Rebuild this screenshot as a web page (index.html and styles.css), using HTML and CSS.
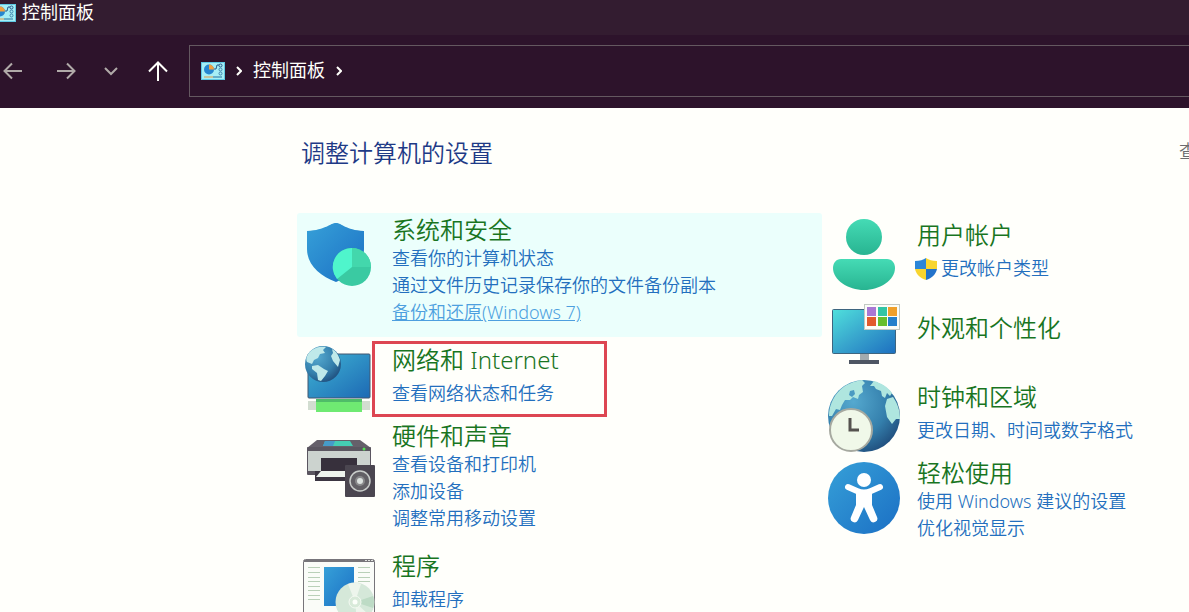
FILE: index.html
```html
<!DOCTYPE html>
<html lang="zh-CN">
<head>
<meta charset="UTF-8">
<meta name="viewport" content="width=device-width, initial-scale=1.0">
<title>控制面板</title>
<link rel="stylesheet" href="styles.css">
</head>
<body>

<!-- shared drawings -->
<svg class="defs" width="0" height="0" aria-hidden="true">
  <defs>
    <linearGradient id="blue" x1="0" y1="0" x2="1" y2="1">
      <stop offset="0" stop-color="#36a0d8"/><stop offset="1" stop-color="#1b6fc4"/>
    </linearGradient>
    <linearGradient id="screen" x1="0" y1="0" x2="1" y2="1">
      <stop offset="0" stop-color="#4fe0dc"/><stop offset=".5" stop-color="#38a5cd"/><stop offset="1" stop-color="#1d6fc0"/>
    </linearGradient>
    <linearGradient id="green" x1="0" y1="0" x2="0" y2="1">
      <stop offset="0" stop-color="#45dbb5"/><stop offset="1" stop-color="#28b491"/>
    </linearGradient>
    <linearGradient id="netscreen" x1="0" y1="0" x2="1" y2="1">
      <stop offset="0" stop-color="#3fb4d4"/><stop offset="1" stop-color="#1d69b4"/>
    </linearGradient>
    <radialGradient id="globe" cx=".35" cy=".3" r=".8">
      <stop offset="0" stop-color="#55a9cf"/><stop offset=".6" stop-color="#347fac"/><stop offset="1" stop-color="#1d4877"/>
    </radialGradient>
    <symbol id="cpl" viewBox="0 0 24 18">
      <rect width="24" height="18" fill="#a6eef5"/>
      <rect x=".5" y=".5" width="23" height="17" fill="none" stroke="#5fc9e4"/>
      <circle cx="8" cy="7.500" r="5" fill="#2686cf"/>
      <path d="M8 7.500V2.500a5 5 0 0 1 5 5z" fill="#f0a040"/>
      <path d="M13 7h2l1-4h2" fill="none" stroke="#27588a"/>
      <circle cx="19.500" cy="3.500" r="1.500" fill="none" stroke="#27588a"/>
      <circle cx="19.500" cy="7.500" r="1.500" fill="none" stroke="#4085b0"/>
      <circle cx="19.500" cy="11.500" r="1.500" fill="none" stroke="#4085b0"/>
      <path d="M3 15h9" stroke="#e39b45"/><path d="M12 15h9" stroke="#27709f"/>
    </symbol>
  </defs>
</svg>

<div class="titlebar">
  <svg class="cpl-icon" aria-hidden="true"><use href="#cpl"/></svg>
  <span>控制面板</span>
</div>

<nav class="toolbar">
  <button class="nav-btn back" aria-label="后退">
    <svg width="20" height="20" viewBox="0 0 20 20"><path d="M19 10H2M9 2.500L1.500 10 9 17.500"/></svg>
  </button>
  <button class="nav-btn forward" aria-label="前进">
    <svg width="20" height="20" viewBox="0 0 20 20"><path d="M1 10h17M11 2.500L18.500 10 11 17.500"/></svg>
  </button>
  <button class="nav-btn recent" aria-label="最近浏览的位置">
    <svg width="14" height="10" viewBox="0 0 14 10"><path d="M1 2l6 6 6-6"/></svg>
  </button>
  <button class="nav-btn up" aria-label="上移">
    <svg width="20" height="20" viewBox="0 0 20 20"><path d="M10 20V2M1 10.500L10 1.500l9 9"/></svg>
  </button>
  <div class="address">
    <svg class="cpl-icon" aria-hidden="true"><use href="#cpl"/></svg>
    <svg class="sep" viewBox="0 0 6 10"><path d="M1 1l4 4-4 4"/></svg>
    <a href="#">控制面板</a>
    <svg class="sep" viewBox="0 0 6 10"><path d="M1 1l4 4-4 4"/></svg>
  </div>
</nav>

<main>
  <header class="page-head">
    <h1>调整计算机的设置</h1>
    <span class="view-by">查</span>
  </header>

  <div class="categories">
    <div class="column">

      <section class="item multi hover">
        <svg class="icon" viewBox="0 0 72 72">
          <path d="M33 4c6 0 9 7 28 8v18c0 16-12 27-28 33C17 57 4 46 4 30V12C23 11 27 4 33 4z" fill="url(#blue)"/>
          <circle cx="49" cy="48" r="19" fill="#3acaa2"/>
          <path d="M49 48V29a19 19 0 0 0-15 31z" fill="#4ff5cc"/>
          <path d="M49 48V29a19 19 0 0 1 19 19z" fill="#43d7ac"/>
        </svg>
        <div class="text">
          <h2><a href="#">系统和安全</a></h2>
          <a href="#">查看你的计算机状态</a>
          <a href="#">通过文件历史记录保存你的文件备份副本</a>
          <a href="#" class="active">备份和还原(Windows 7)</a>
        </div>
      </section>

      <section class="item">
        <svg class="icon" viewBox="0 0 72 72">
          <rect x="5" y="11" width="62" height="44" rx="1" fill="url(#netscreen)" stroke="#43566e"/>
          <path d="M5 58h8v9H5zM59 58h8v9h-8z" fill="#d2ddd0"/>
          <rect x="13" y="56" width="46" height="13" fill="#6fea72"/>
          <path d="M13 56h46v3H13z" fill="#4fbd68"/>
          <circle cx="20" cy="21" r="18" fill="url(#globe)"/>
          <path d="M9 7c4-3 9-4 14-3l-3 3 2 3-5 1-2 4-4 2-2 4-5-2c-2-4 1-9 5-12zM29 6c4 2 7 7 8 11l-2 7-5-6-2-5 2-3zM9 23l6-1 6 4 4 2-3 5-4 5-3-1-1-7-5-4z" fill="#bfe9ea"/>
        </svg>
        <div class="text">
          <h2><a href="#">网络和 Internet</a></h2>
          <a href="#">查看网络状态和任务</a>
        </div>
        <div class="mark"></div>
      </section>

      <section class="item multi">
        <svg class="icon" viewBox="0 0 72 72">
          <path d="M14 15h43l11 8H4z" fill="#65606a"/>
          <path d="M22 16h25l3 5H20z" fill="#45cdb3"/><path d="M22 16h10l-2 5H20z" fill="#469bc9"/>
          <rect x="4" y="22" width="64" height="28" rx="1" fill="#5b5660"/>
          <rect x="5" y="26" width="62" height="20" fill="#ccd3cf"/>
          <circle cx="61" cy="24" r="1.500" fill="#54e356"/>
          <path d="M18 33h36v14H18z" fill="#37303c"/>
          <path d="M12 46h36v10H12z" fill="#3c3642"/>
          <path d="M18 46h28v6H13z" fill="#edf3ed"/>
          <rect x="42" y="40" width="30" height="32" rx="1" fill="#4b4650"/>
          <circle cx="57" cy="56" r="10" fill="#626065" stroke="#c9cdca" stroke-width="1.500"/>
          <circle cx="57" cy="56" r="5" fill="#89898b"/><circle cx="57" cy="56" r="3" fill="#dce2df"/>
        </svg>
        <div class="text">
          <h2><a href="#">硬件和声音</a></h2>
          <a href="#">查看设备和打印机</a>
          <a href="#">添加设备</a>
          <a href="#">调整常用移动设置</a>
        </div>
      </section>

      <section class="item">
        <svg class="icon" viewBox="0 0 72 72">
          <rect x=".5" y="10.500" width="71" height="58" rx="2" fill="#fafcf8" stroke="#77757a"/>
          <path d="M1 11h70v2H1z" fill="#77757a"/>
          <path d="M62 11.500h8" stroke="#e2e4e0" stroke-dasharray="2 1"/>
          <path d="M5 18.500h12M5 23.500h12M5 28.500h12M5 32.500h12M5 37.500h12M5 41.500h12M5 46.500h12M5 50.500h12M55 18.500h12M55 23.500h12M55 28.500h12M55 32.500h12" stroke="#b9d0b8"/>
          <rect x="21" y="18" width="30" height="39" fill="url(#blue)"/>
          <circle cx="52" cy="53" r="19.500" fill="#d5e8d9"/>
          <path d="M52 53L45 35a19.500 19.500 0 0 1 13 0zM52 53l14 13a19.500 19.500 0 0 1-12 6z" fill="#edf5ec"/>
          <path d="M52 53l18-6a19.500 19.500 0 0 1 0 12z" fill="#bddbc5"/>
          <circle cx="52" cy="53" r="6" fill="#d8ead9" stroke="#f5faf3"/><circle cx="52" cy="53" r="2.500" fill="#fcfffa"/>
        </svg>
        <div class="text">
          <h2><a href="#">程序</a></h2>
          <a href="#">卸载程序</a>
        </div>
      </section>
    </div>

    <div class="column right">

      <section class="item">
        <svg class="icon" viewBox="0 0 72 72">
          <circle cx="36" cy="19" r="18" fill="url(#green)"/>
          <path d="M13 41h46c5 0 8 4 8 9 0 12-15 22-31 22S5 62 5 50c0-5 3-9 8-9z" fill="url(#green)"/>
        </svg>
        <div class="text">
          <h2><a href="#">用户帐户</a></h2>
          <a href="#" class="admin">
            <svg viewBox="0 0 22 22">
              <path d="M11 0C8 2 5 3 0 3v8h11z" fill="#2b86d8"/>
              <path d="M11 0c3 2 6 3 11 3v8H11z" fill="#f8d52f"/>
              <path d="M0 11c1 5 5 9 11 11V11z" fill="#f8d52f"/>
              <path d="M22 11c-1 5-5 9-11 11V11z" fill="#2373ca"/>
            </svg>更改帐户类型</a>
        </div>
      </section>

      <section class="item single">
        <svg class="icon" viewBox="0 0 72 72">
          <path d="M32 53h9v9h-9z" fill="#a2abaf"/><path d="M21 60h30v4H21z" fill="#4e5663"/>
          <rect x="4.500" y="9.500" width="63" height="44" rx="1" fill="url(#screen)" stroke="#3e657f"/>
          <rect x="36.500" y="4.500" width="35" height="25" fill="#fbfdf7" stroke="#c2c9c3"/>
          <path d="M39 7h9v9h-9z" fill="#a978d4"/><path d="M50 7h9v9h-9z" fill="#32c5a4"/><path d="M60 7h9v9h-9z" fill="#efa02b"/>
          <path d="M39 17h9v9h-9z" fill="#e25b2c"/><path d="M50 17h9v9h-9z" fill="#66bf2c"/><path d="M60 17h9v9h-9z" fill="#2480cb"/>
        </svg>
        <div class="text">
          <h2><a href="#">外观和个性化</a></h2>
        </div>
      </section>

      <section class="item">
        <svg class="icon" viewBox="0 0 72 72">
          <circle cx="36" cy="36" r="36" fill="url(#globe)"/>
          <path d="M12 10c6-6 15-9 22-10l3 3-3 3 1 6-4 3-1 4-5-2-3 3-5 0-3 5-2 5-4-1-4 7-3 0c0-10 4-19 11-26zM46 1c7 2 14 6 18 12l-2 3-3-3-2 5-3-2-1-5-5-2-2-3-4 0zM59 19l6-2c5 7 7 14 7 22l-4 0-4 5-5-7-2-11z" fill="#afe6df"/>
          <path d="M22 11l4-1 1 4-3 3-3-2z" fill="#4a9ac2"/>
          <circle cx="23" cy="50" r="21" fill="#f0f8e9" stroke="#a6a9a0" stroke-width="2"/>
          <path d="M22 38v12h9" fill="none" stroke="#55524f" stroke-width="3"/>
        </svg>
        <div class="text">
          <h2><a href="#">时钟和区域</a></h2>
          <a href="#">更改日期、时间或数字格式</a>
        </div>
      </section>

      <section class="item multi">
        <svg class="icon" viewBox="0 0 72 72">
          <circle cx="36" cy="36" r="36" fill="url(#blue)"/>
          <circle cx="36" cy="18" r="7" fill="#fff"/>
          <path d="M20 25l9 4q7 3 14 0l9-4" fill="none" stroke="#fff" stroke-width="6" stroke-linecap="round"/>
          <path d="M28 28h16v15l5 12a3.500 3.500 0 0 1-7 3l-6-13-6 13a3.500 3.500 0 0 1-7-3l5-12z" fill="#fff"/>
        </svg>
        <div class="text">
          <h2><a href="#">轻松使用</a></h2>
          <a href="#">使用 Windows 建议的设置</a>
          <a href="#">优化视觉显示</a>
        </div>
      </section>
    </div>
  </div>
</main>

</body>
</html>
```

FILE: styles.css
```css
* {
    box-sizing: border-box;
}
body {
    margin: 0;
    background-color: #fffffb;
    font-family: "Noto Sans", "Noto Sans CJK SC", sans-serif;
    font-size: 18px;
    line-height: 27px;
    overflow: hidden;
}
a {
    color: #236fbe;
    text-decoration: none;
}
a:hover {
    text-decoration: underline;
}
h1, h2 {
    margin: 0;
    font-size: 24px;
    font-weight: 350;
    line-height: 30px;
}
.defs {
    display: block;
}

/* window frame */
.titlebar {
    display: flex;
    align-items: center;
    gap: 6px;
    height: 35px;
    padding-bottom: 10px;
    background-color: #331c30;
    color: #fffffb;
}
.cpl-icon {
    width: 24px;
    height: 18px;
    flex: none;
}
.titlebar .cpl-icon {
    margin-left: -8px;
}
.toolbar {
    display: flex;
    align-items: center;
    height: 73px;
    padding-bottom: 2px;
    background-color: #2d132b;
}
.nav-btn {
    display: flex;
    align-items: center;
    justify-content: center;
    flex: none;
    height: 40px;
    padding: 0;
    border: none;
    background: none;
    color: #b0aaa8;
}
.nav-btn svg, .sep {
    fill: none;
    stroke: currentColor;
    stroke-width: 2;
}
.back {
    width: 26px;
}
.forward {
    width: 48px;
    margin-left: 16px;
}
.recent {
    width: 42px;
}
.up {
    width: 52px;
    color: #fffffb;
}
.address {
    display: flex;
    align-items: center;
    flex: 1;
    gap: 11px;
    height: 52px;
    margin-left: 5px;
    padding-left: 11px;
    border: 1px solid #645860;
    border-right: none;
    color: #fffffb;
}
.address a {
    color: #fffffb;
}
.sep {
    width: 6px;
    height: 10px;
}

/* content */
main {
    padding: 30px 0 0 297px;
}
.page-head {
    display: flex;
    padding-left: 4px;
}
.page-head h1 {
    flex: 0 0 878px;
    color: #1e3a86;
}
.view-by {
    color: #6b6b70;
    font-weight: 350;
    white-space: nowrap;
}
.categories {
    display: grid;
    grid-template-columns: 525px 1fr;
    margin-top: 45px;
}
.column {
    display: flex;
    flex-direction: column;
    gap: 4px;
}
.right {
    padding-top: 3px;
}
.item {
    position: relative;
    display: flex;
    gap: 17px;
    min-height: 74px;
    padding: 2px 0 0 6px;
    border-radius: 3px;
}
.icon {
    width: 72px;
    height: 72px;
    flex: none;
}
.text {
    display: flex;
    flex-direction: column;
    align-items: flex-start;
    gap: 5px;
    padding-top: 2px;
    font-weight: 350;
    white-space: nowrap;
}
.text h2 a {
    color: #19751f;
}
.multi .icon {
    margin-top: 4px;
}
.multi .text {
    gap: 0;
    padding: 0 0 11px;
}
.single {
    min-height: 80px;
}
.single .icon {
    margin-top: 4px;
}
.single .text {
    padding-top: 17px;
}
.hover {
    background-color: #ebfffc;
}
.text .active {
    color: #4d9fdf;
    text-decoration: underline;
}
.admin {
    display: flex;
    align-items: center;
    gap: 4px;
    margin-left: -2px;
}
.admin svg {
    width: 22px;
    height: 22px;
}

/* red frame laid over the network entry */
.mark {
    position: absolute;
    top: 0;
    left: 75px;
    width: 235px;
    height: 76px;
    border: 3px solid #dd4652;
}
```
